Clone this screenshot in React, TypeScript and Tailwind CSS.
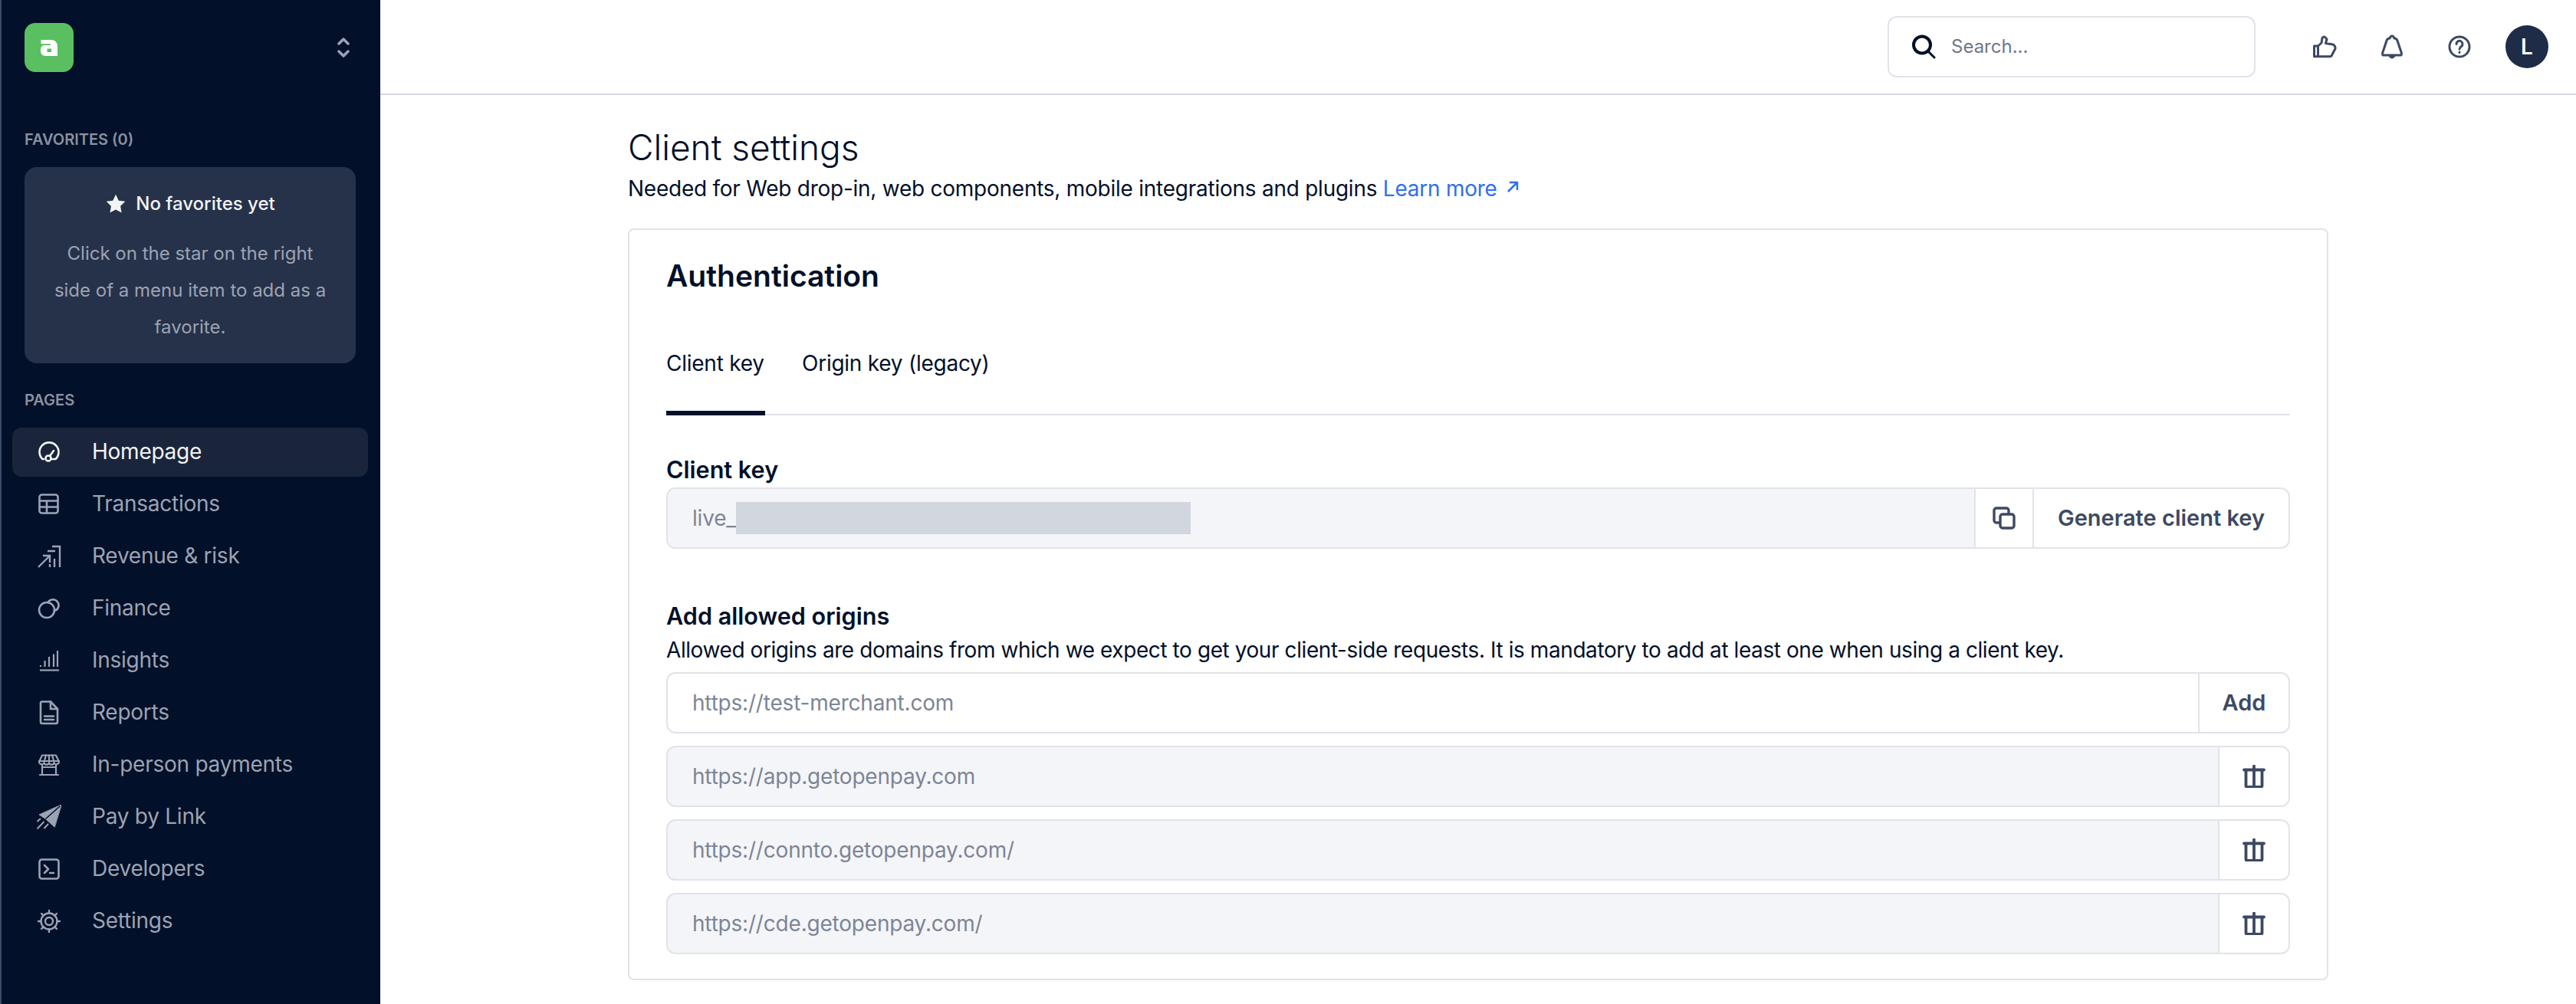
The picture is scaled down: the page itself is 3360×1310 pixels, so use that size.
import React from "react"

const navy = "#3d4963"

function Ic({ children, fill = "none", w = 2.6 }: { children: React.ReactNode; fill?: string; w?: number }) {
  return (
    <svg width="32" height="32" viewBox="0 0 32 32" fill={fill} stroke="currentColor" strokeWidth={w} strokeLinecap="round" strokeLinejoin="round" className="shrink-0">
      {children}
    </svg>
  )
}

const navItems: { label: string; icon: React.ReactNode }[] = [
  {
    label: "Homepage",
    icon: (
      <Ic>
        <path d="M9 25H7.5A12.5 12.5 0 1 1 24.5 25H20" />
        <circle cx="15" cy="24" r="3.5" />
        <path d="M17 21l5-7" />
      </Ic>
    ),
  },
  {
    label: "Transactions",
    icon: (
      <Ic>
        <rect x="3.5" y="3.5" width="24" height="24" rx="3" />
        <path d="M3.5 11.5h24M3.5 19.5h24M13 11.5v16" />
      </Ic>
    ),
  },
  {
    label: "Revenue & risk",
    icon: (
      <Ic w={2.4}>
        <path d="M2 30L16 16M8 15h9v9" strokeLinecap="butt" strokeLinejoin="miter" />
        <path d="M20 3h10v27M14 9h10M23 19v11M17 26v4" strokeLinecap="butt" strokeLinejoin="miter" />
      </Ic>
    ),
  },
  {
    label: "Finance",
    icon: (
      <Ic>
        <circle cx="13" cy="18" r="10" />
        <path d="M14.5 8A7.5 7.5 0 1 1 22.8 19" />
      </Ic>
    ),
  },
  {
    label: "Insights",
    icon: (
      <Ic w={2.2}>
        <path d="M4 28.5h25" strokeLinecap="butt" />
        <path d="M5 24v-2M10.5 24v-8M16 24V11M22 24V7.5M27 24V3" strokeLinecap="butt" />
      </Ic>
    ),
  },
  {
    label: "Reports",
    icon: (
      <Ic>
        <path d="M7 1.5h11L27 11v17a2 2 0 0 1-2 2H7a2 2 0 0 1-2-2V3.5a2 2 0 0 1 2-2z" />
        <path d="M18 1.5V11h9M10 20.5h12M10 25h12" />
      </Ic>
    ),
  },
  {
    label: "In-person payments",
    icon: (
      <Ic w={2.2}>
        <path d="M7 3.5h18l4 8.5a3.5 3.5 0 0 1-6.5 1.5 3.5 3.5 0 0 1-6.5 0 3.5 3.5 0 0 1-6.5 0A3.5 3.5 0 0 1 3 12z" />
        <path d="M3 11h26M12 3.5 9.5 12M20 3.5 22.5 12M16 3.5V12" />
        <path d="M7 16v12M25 16v12M4 29h24M7 19h18" />
      </Ic>
    ),
  },
  {
    label: "Pay by Link",
    icon: (
      <Ic w={2}>
        <path d="M32 0L3 13l8.500 5.500L23 29z" fill="currentColor" strokeWidth="1" />
        <path d="M30 2L12 18" stroke="#021029" strokeWidth="1.5" />
        <path d="M0.500 31.500L9.500 22M9.500 31L15 25M0.500 22L5 18" strokeLinecap="butt" />
      </Ic>
    ),
  },
  {
    label: "Developers",
    icon: (
      <Ic>
        <rect x="3.5" y="3.5" width="25" height="25" rx="3" />
        <path d="M10 11l5 5-5 5M17 21h5" />
      </Ic>
    ),
  },
  {
    label: "Settings",
    icon: (
      <Ic w={2.4}>
        <circle cx="16" cy="16" r="10.5" />
        <circle cx="16" cy="16" r="5" />
        <path d="M16 2v3.500M16 26.500V30M2 16h3.500M26.500 16H30M6.100 6.100l2.500 2.500M23.400 23.400l2.500 2.500M6.100 25.900l2.500-2.500M23.400 8.600l2.500-2.500" />
      </Ic>
    ),
  },
]

function Sidebar() {
  return (
    <aside className="w-[496px] shrink-0 border-l-2 border-[#3b4a66] bg-[#021029] pl-[30px] pr-[30px]">
      <div className="flex h-[124px] items-start justify-between pt-[30px]">
        <div className="flex h-16 w-16 items-center justify-center rounded-[14px] bg-[#5abf60]">
          <svg width="24" height="24" viewBox="0 0 24 24" fill="#fff">
            <path fillRule="evenodd" d="M1.500 2H15a8 8 0 0 1 8 8v13H7a6 6 0 0 1-6-6v-3a5 5 0 0 1 5-5h8.500a2 2 0 0 0-2-1.800H1.500zM9.500 13.500v4.500H15v-4.500z" />
          </svg>
        </div>
        <svg width="16" height="26" viewBox="0 0 16 26" fill="none" stroke="#9ca3b3" strokeWidth="3.5" strokeLinecap="round" strokeLinejoin="round" className="mt-[19px] mr-[10px]">
          <path d="M2 8l6-6 6 6M2 18l6 6 6-6" />
        </svg>
      </div>
      <div className="mt-[46px] text-[20px] leading-6 font-semibold text-[#8a91a1]">FAVORITES (0)</div>
      <div className="mt-[24px] flex h-[256px] w-[432px] flex-col items-center rounded-2xl bg-[#26324a] px-[38px] pt-[32px] text-center">
        <div className="flex items-center gap-3 text-[24px] leading-[32px] font-medium whitespace-nowrap text-[#f3f4f6]">
          <svg width="28" height="28" viewBox="0 0 24 24" fill="#f3f4f6">
            <path d="M12 1.500l3.200 6.800 7.300 1-5.300 5.200 1.300 7.400L12 18.400l-6.500 3.500 1.300-7.400L1.500 9.300l7.300-1z" />
          </svg>
          No favorites yet
        </div>
        <p className="mt-[25px] text-[24px] leading-[48px] text-[#9ca3b3]">Click on the star on the right side of a menu item to add as a favorite.</p>
      </div>
      <div className="mt-[36px] text-[20px] leading-6 font-semibold text-[#8a91a1]">PAGES</div>
      <nav className="mt-[24px] -mx-4 flex w-[464px] flex-col gap-1">
        {navItems.map((item, i) => (
          <div key={item.label} className={`flex h-16 items-center gap-[40px] rounded-xl pl-8 text-[28px] tracking-[-0.25px] ${i === 0 ? "bg-[#1a253c] text-[#f3f4f6]" : "text-[#9ca3b3]"}`}>
            {item.icon}
            <span className="mb-[2px]">{item.label}</span>
          </div>
        ))}
      </nav>
    </aside>
  )
}

function Header() {
  return (
    <header className="flex h-[124px] shrink-0 items-center justify-end border-b-2 border-[#d5d9e0] bg-white pr-[36px]">
      <div className="flex h-[80px] w-[480px] items-center gap-[20px] rounded-xl border-2 border-[#e0e3e9] pl-[29px] text-[24px] text-[#6e778a]">
        <svg width="32" height="32" viewBox="0 0 32 32" fill="none" stroke="#021029" strokeWidth="4" strokeLinecap="round">
          <circle cx="14" cy="13.5" r="11" />
          <path d="M22 22l8 8" strokeWidth="3" />
        </svg>
        Search...
      </div>
      <div className="ml-[74px] flex items-center gap-[54px] text-[#3d4963]">
        <svg width="32" height="32" viewBox="0 0 32 32" fill="none" stroke="currentColor" strokeWidth="3" strokeLinejoin="round" strokeLinecap="round">
          <path d="M7.500 15L12 11l1-6.500Q15 2 17 4l2 2-1.500 5.500L27 13q3.500 2 3 5.500L25.500 27q-.5 1.700-2.500 1.700H2.500V15h5v13.700" />
        </svg>
        <svg width="32" height="36" viewBox="0 0 32 36" fill="none" stroke="currentColor" strokeWidth="3" strokeLinejoin="round" strokeLinecap="round" className="ml-[2px]">
          <path d="M4 29q-1-2 0-4L9 10q1-3 4-3l1-2q2-2 4 0l1 2q3 0 4 3l5 15q1 2 0 4zM12.500 29q3.500 6 7 0" />
        </svg>
        <svg width="32" height="32" viewBox="0 0 32 32" fill="none" stroke="currentColor" strokeWidth="3" strokeLinecap="round" strokeLinejoin="round" className="ml-[2px]">
          <circle cx="16" cy="16" r="13" />
          <path d="M12 12.500a4 4 0 1 1 6.500 3c-1.500 1-2.500 2-2.500 3.500M16 23v.5" />
        </svg>
        <div className="-ml-[10px] flex h-14 w-14 items-center justify-center rounded-full bg-[#1f2c47] text-[28px] font-semibold text-white">L</div>
      </div>
    </header>
  )
}

function TrashBtn() {
  return (
    <div className="flex w-[92px] shrink-0 items-center justify-center border-l-2 border-[#e0e3e9] bg-white">
      <svg width="30" height="30" viewBox="0 0 30 30" fill="none" stroke={navy} strokeWidth="3.8" strokeLinecap="round" strokeLinejoin="round">
        <path d="M2 6.500h26M15 1.500v27M4.500 7v20a2 2 0 0 0 2 2h17a2 2 0 0 0 2-2V7" />
      </svg>
    </div>
  )
}

function OriginRow({ url }: { url: string }) {
  return (
    <div className="flex h-[80px] overflow-hidden rounded-xl border-2 border-[#e0e3e9] bg-[#f4f5f9]">
      <div className="flex flex-1 items-center pl-[32px] text-[28px] tracking-[-0.2px] text-[#7d8596]">{url}</div>
      <TrashBtn />
    </div>
  )
}

export default function App() {
  return (
    <div className="flex h-[1310px] w-[3360px] overflow-hidden bg-white font-['Inter',sans-serif] text-[#021029]">
      <Sidebar />
      <main className="flex min-w-0 flex-1 flex-col">
        <Header />
        <div className="pl-[323px]">
          <h1 className="mt-[40px] text-[46px] leading-[56px] font-light">Client settings</h1>
          <p className="mt-[4px] text-[28px] leading-[44px] tracking-[-0.25px]">
            Needed for Web drop-in, web components, mobile integrations and plugins{" "}
            <span className="text-[#2f6fed]">Learn more</span>
            <svg width="20" height="20" viewBox="0 0 20 20" fill="none" stroke="#2f6fed" strokeWidth="2.5" className="ml-[10px] inline-block align-[2px]">
              <path d="M4 16L16 4M6 4h10v10" />
            </svg>
          </p>
          <section className="mt-[30px] h-[981px] w-[2218px] rounded-lg border-2 border-[#e0e3e9] px-[48px]">
            <h2 className="mt-[36px] text-[39px] leading-[48px] font-semibold">Authentication</h2>
            <div className="mt-[46px] flex h-[112px] gap-[48px] border-b-2 border-[#e0e3e9] text-[28px] tracking-[-0.25px]">
              <div className="h-[112px] w-[129px] border-b-[6px] border-[#021029] pt-[22px] leading-[44px] whitespace-nowrap">Client key</div>
              <div className="pt-[22px] leading-[44px] whitespace-nowrap">Origin key (legacy)</div>
            </div>
            <div className="mt-[51px] text-[30.6px] leading-[40px] font-semibold">Client key</div>
            <div className="mt-[3px] flex h-[80px] overflow-hidden rounded-xl border-2 border-[#e0e3e9]">
              <div className="flex flex-1 items-center bg-[#f4f5f9] pl-[32px] text-[28px] tracking-[-0.2px] text-[#7d8596]">
                <span className="w-[57px]">live_</span>
                <div className="h-[42px] w-[593px] bg-[#d2d6de]" />
              </div>
              <div className="flex w-[78px] items-center justify-center border-x-2 border-[#e0e3e9]">
                <svg width="30" height="30" viewBox="0 0 30 30" fill="none" stroke={navy} strokeWidth="3.4" strokeLinejoin="round">
                  <rect x="10" y="10" width="18" height="18" rx="3" />
                  <path d="M10 21H5a3 3 0 0 1-3-3V5a3 3 0 0 1 3-3h13a3 3 0 0 1 3 3v5" />
                </svg>
              </div>
              <div className="flex w-[332px] items-center justify-center text-[29px] font-semibold text-[#3d4963]">Generate client key</div>
            </div>
            <div className="mt-[68px] text-[30.6px] leading-[40px] font-semibold">Add allowed origins</div>
            <p className="mt-[2px] text-[28px] leading-[44px] tracking-[-0.42px]">Allowed origins are domains from which we expect to get your client-side requests. It is mandatory to add at least one when using a client key.</p>
            <div className="mt-[7px] flex h-[80px] overflow-hidden rounded-xl border-2 border-[#e0e3e9]">
              <div className="flex flex-1 items-center pl-[32px] text-[28px] tracking-[-0.2px] text-[#7d8596]">https://test-merchant.com</div>
              <div className="flex w-[118px] items-center justify-center border-l-2 border-[#e0e3e9] text-[29px] font-semibold text-[#3d4963]">Add</div>
            </div>
            <div className="mt-[16px] flex flex-col gap-[16px]">
              <OriginRow url="https://app.getopenpay.com" />
              <OriginRow url="https://connto.getopenpay.com/" />
              <OriginRow url="https://cde.getopenpay.com/" />
            </div>
          </section>
        </div>
      </main>
    </div>
  )
}
